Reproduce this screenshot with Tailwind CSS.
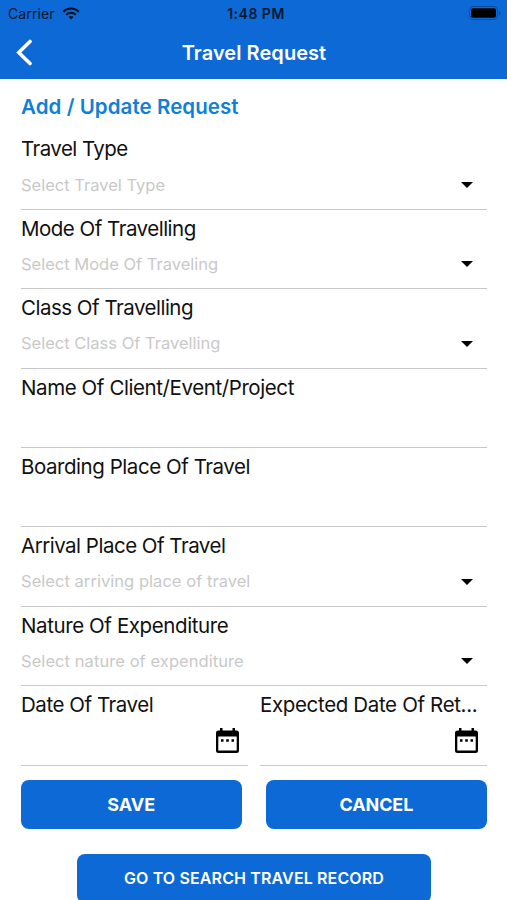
<!DOCTYPE html>
<html lang="en">
<head>
<meta charset="utf-8">
<title>Travel Request</title>
<script src="https://cdn.jsdelivr.net/npm/@tailwindcss/browser@4"></script>
</head>
<body class="bg-white font-['Inter',sans-serif] text-[#111]">
<div class="w-[507px] h-[900px] overflow-hidden flex flex-col">
  <header class="bg-[#0d69d5] h-[79px] shrink-0 flex flex-col">
    <div class="h-[27px] grid grid-cols-3 items-center pl-2 pr-[6px] text-[#06182f]">
      <div class="flex items-center gap-[7px]">
        <span class="text-[14px] leading-[27px] tracking-[0.1px]">Carrier</span>
        <svg class="w-[18px] h-[13px] -mt-px" viewBox="0 0 18 13" fill="none" stroke="#03101f" stroke-width="2.1"><path d="M1.200 4.800a11 11 0 0 1 15.600 0M4.100 7.800a7 7 0 0 1 9.800 0"/><path d="M9 12.600 6.500 10.100a3.600 3.600 0 0 1 5 0z" fill="#03101f" stroke="none"/></svg>
      </div>
      <span class="text-center text-[14px] leading-[26px] pl-[3px] tracking-[0.5px] font-semibold whitespace-nowrap">1:48 PM</span>
      <svg class="justify-self-end w-[32px] h-[14px] -mt-px" viewBox="0 0 32 14"><rect x=".5" y=".5" width="28" height="13" rx="3.500" fill="none" stroke="#0b4d9c"/><rect x="2" y="2.300" width="25" height="9.400" rx="2" fill="#000"/><path d="M30 4.500c2 .8 2 4.200 0 5z" fill="#0b4d9c"/></svg>
    </div>
    <div class="h-[52px] grid grid-cols-[60px_1fr_60px] items-center">
      <svg class="ml-[16px] w-[17px] h-[27px] -mt-px" viewBox="0 0 17 27" fill="none" stroke="#fff" stroke-width="3.600" stroke-linecap="round"><path d="M14 2.500 2.800 13.500 14 24.500"/></svg>
      <h1 class="text-center text-[20px] tracking-[0.06px] font-semibold text-white -mt-px pl-px">Travel Request</h1>
    </div>
  </header>
  <main class="pl-[21px] pr-[20px] flex flex-col">
    <h2 class="h-[51.4px] pt-[14px] text-[20.5px] leading-[28px] tracking-[0.07px] font-semibold text-[#0f80d8]">Add / Update Request</h2>
    <section class="h-[79.4px] shrink-0 border-b border-[#c8c8c8]">
      <h3 class="h-[37px] leading-[37px] text-[20.5px] tracking-[-0.55px]">Travel Type</h3>
      <div class="h-[35px] flex items-center justify-between pr-[14.5px]"><span class="text-[16.5px] text-[#c9c9c9]">Select Travel Type</span><svg class="w-3 h-[6px]" viewBox="0 0 12 6"><path d="M0 0h12L6 6z"/></svg></div>
    </section>
    <section class="h-[79.4px] shrink-0 border-b border-[#c8c8c8]">
      <h3 class="h-[37px] leading-[37px] text-[20.5px] tracking-[-0.5px]">Mode Of Travelling</h3>
      <div class="h-[35px] flex items-center justify-between pr-[14.5px]"><span class="text-[16.5px] text-[#c9c9c9]">Select Mode Of Traveling</span><svg class="w-3 h-[6px]" viewBox="0 0 12 6"><path d="M0 0h12L6 6z"/></svg></div>
    </section>
    <section class="h-[79.4px] shrink-0 border-b border-[#c8c8c8]">
      <h3 class="h-[37px] leading-[37px] text-[20.5px] tracking-[-0.5px]">Class Of Travelling</h3>
      <div class="h-[35px] flex items-center justify-between pr-[14.5px]"><span class="text-[16.5px] text-[#c9c9c9]">Select Class Of Travelling</span><svg class="w-3 h-[6px]" viewBox="0 0 12 6"><path d="M0 0h12L6 6z"/></svg></div>
    </section>
    <section class="h-[79.4px] shrink-0 border-b border-[#c8c8c8]">
      <h3 class="h-[37px] leading-[37px] text-[20.5px] tracking-[-0.41px]">Name Of Client/Event/Project</h3>
    </section>
    <section class="h-[79.4px] shrink-0 border-b border-[#c8c8c8]">
      <h3 class="h-[37px] leading-[37px] text-[20.5px] tracking-[-0.45px]">Boarding Place Of Travel</h3>
    </section>
    <section class="h-[79.4px] shrink-0 border-b border-[#c8c8c8]">
      <h3 class="h-[37px] leading-[37px] text-[20.5px] tracking-[-0.5px]">Arrival Place Of Travel</h3>
      <div class="h-[35px] flex items-center justify-between pr-[14.5px]"><span class="text-[16.5px] tracking-[0.04px] text-[#c9c9c9]">Select arriving place of travel</span><svg class="w-3 h-[6px]" viewBox="0 0 12 6"><path d="M0 0h12L6 6z"/></svg></div>
    </section>
    <section class="h-[79.4px] shrink-0 border-b border-[#c8c8c8]">
      <h3 class="h-[37px] leading-[37px] text-[20.5px] tracking-[-0.4px]">Nature Of Expenditure</h3>
      <div class="h-[35px] flex items-center justify-between pr-[14.5px]"><span class="text-[16.5px] tracking-[0.07px] text-[#c9c9c9]">Select nature of expenditure</span><svg class="w-3 h-[6px]" viewBox="0 0 12 6"><path d="M0 0h12L6 6z"/></svg></div>
    </section>
    <div class="grid grid-cols-2 gap-x-[12px]">
      <section class="h-[79.4px] border-b border-[#c8c8c8] flex flex-col">
        <h3 class="h-[37px] leading-[37px] text-[20.5px] tracking-[-0.45px]">Date Of Travel</h3>
        <svg class="self-end mr-[9px] mt-[5px] w-[23px] h-[25px]" viewBox="0 0 23 25"><path fill-rule="evenodd" d="M4 0h2.500v2.500h10V0H19v2.500h1.500A2.500 2.500 0 0 1 23 5v17.500a2.500 2.500 0 0 1-2.500 2.500h-18A2.500 2.500 0 0 1 0 22.500V5a2.500 2.500 0 0 1 2.500-2.500H4zM2.300 8.500v14h18.400v-14zM5 11.200h2.500v2.500H5zm5.200 0h2.600v2.500h-2.600zm5.300 0H18v2.500h-2.500z"/></svg>
      </section>
      <section class="h-[79.4px] border-b border-[#c8c8c8] flex flex-col">
        <h3 class="h-[37px] leading-[37px] text-[20.5px] tracking-[-0.35px] whitespace-nowrap">Expected Date Of Ret...</h3>
        <svg class="self-end mr-[9px] mt-[5px] w-[23px] h-[25px]" viewBox="0 0 23 25"><path fill-rule="evenodd" d="M4 0h2.500v2.500h10V0H19v2.500h1.500A2.500 2.500 0 0 1 23 5v17.500a2.500 2.500 0 0 1-2.500 2.500h-18A2.500 2.500 0 0 1 0 22.500V5a2.500 2.500 0 0 1 2.500-2.500H4zM2.300 8.500v14h18.400v-14zM5 11.200h2.500v2.500H5zm5.200 0h2.600v2.500h-2.600zm5.300 0H18v2.500h-2.500z"/></svg>
      </section>
    </div>
    <div class="mt-[14.6px] grid grid-cols-2 gap-[24px] h-[49px] -ml-[0.5px]">
      <button class="rounded-[8px] bg-[#0d69d5] text-white text-[18px] leading-[27px] font-bold">SAVE</button>
      <button class="rounded-[8px] bg-[#0d69d5] text-white text-[18px] leading-[27px] font-bold tracking-[-0.1px]">CANCEL</button>
    </div>
    <button class="mt-[24.4px] self-center w-[354px] h-[49px] shrink-0 rounded-[8px] bg-[#0d69d5] text-white text-[16px] tracking-[0.13px] font-semibold">GO TO SEARCH TRAVEL RECORD</button>
  </main>
</div>
</body>
</html>
